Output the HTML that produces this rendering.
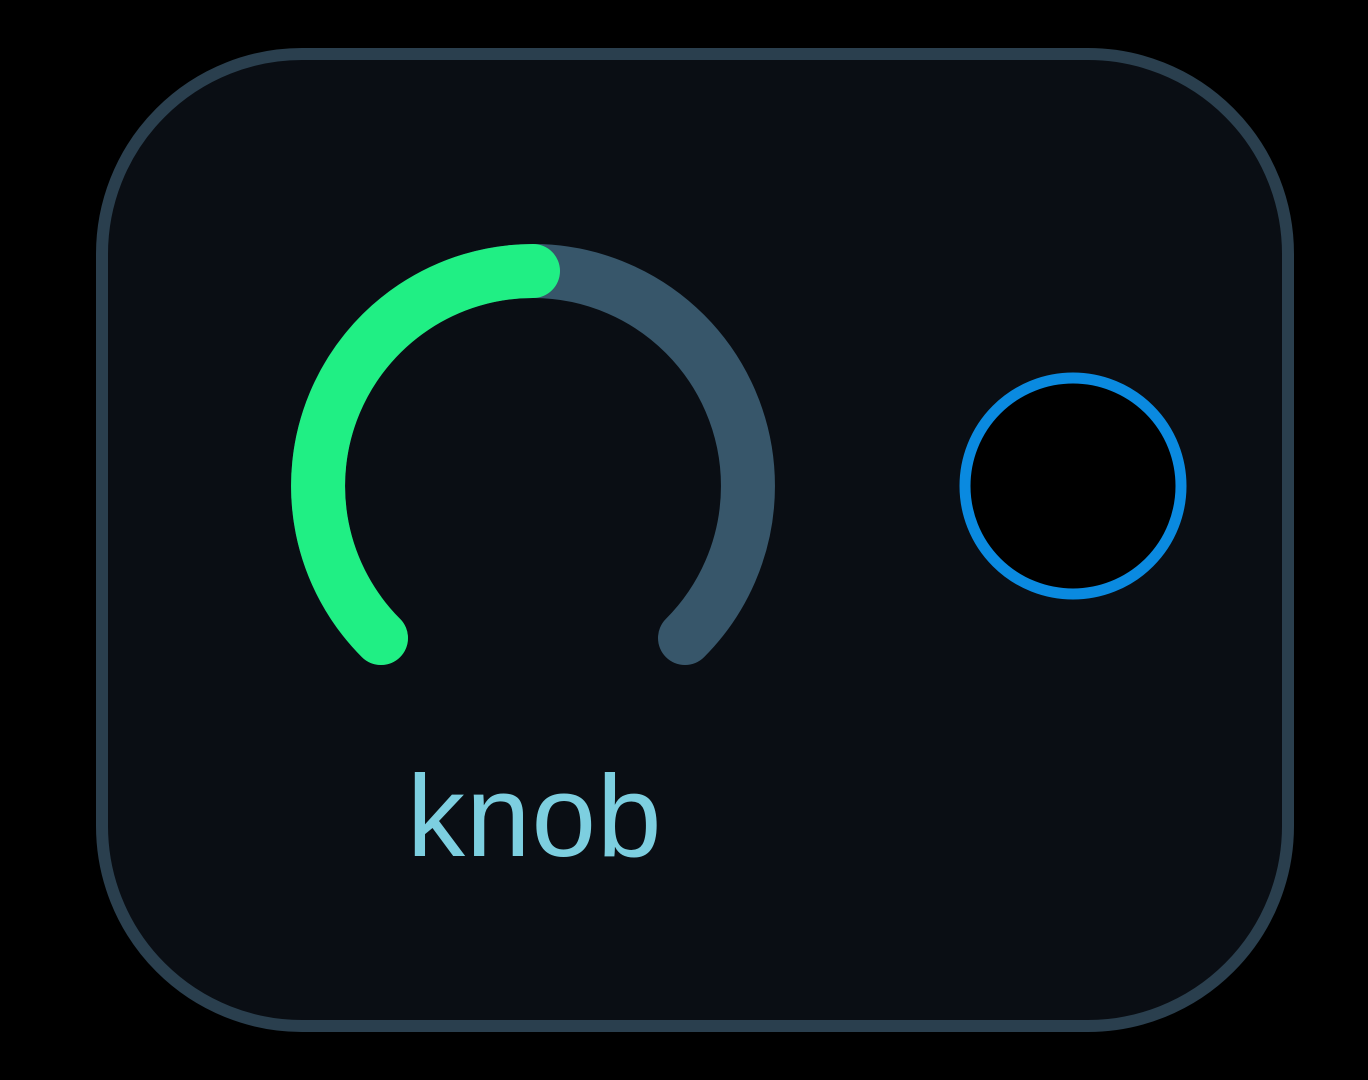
<!DOCTYPE html>
<html><head><style>
html,body{margin:0;padding:0;background:#000;width:1368px;height:1080px;overflow:hidden}
.card{position:absolute;left:96px;top:48px;width:1174px;height:960px;border:12px solid #2a3f4e;border-radius:206px;background:#0a0e14}
.lbl{position:absolute;left:407px;top:758px;font-family:"Liberation Sans","DejaVu Sans",sans-serif;font-size:116px;letter-spacing:1px;color:#7dcfe0;line-height:1}
</style></head><body>
<div class="card"></div>
<svg width="1368" height="1080" style="position:absolute;left:0;top:0">
<path d="M381.0 638.0 A215 215 0 1 1 685.0 638.0" fill="none" stroke="#37566a" stroke-width="54" stroke-linecap="round"/>
<path d="M381.0 638.0 A215 215 0 0 1 533 271" fill="none" stroke="#20ef84" stroke-width="54" stroke-linecap="round"/>
<circle cx="1073" cy="486" r="108" fill="#000" stroke="#0a8ae0" stroke-width="11"/>
</svg>
<div class="lbl">knob</div>
</body></html>
